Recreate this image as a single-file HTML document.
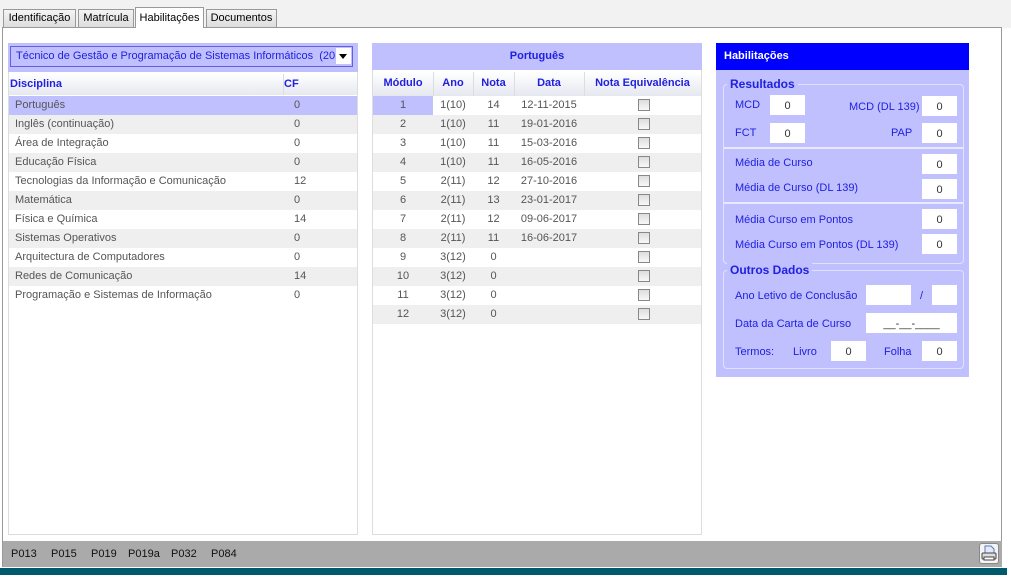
<!DOCTYPE html>
<html><head><meta charset="utf-8"><style>
*{margin:0;padding:0;box-sizing:border-box}
body{width:1011px;height:582px;background:#fff;font-family:"Liberation Sans",sans-serif;font-size:11px;position:relative;overflow:hidden}
.a{position:absolute}
.tab{position:absolute;top:9px;height:19px;border:1px solid #999;border-bottom:none;background:#e4e4e4;color:#000;font-size:11px;line-height:17px;text-align:center;background:linear-gradient(#f4f4f4,#dcdcdc)}
.blue{color:#2020e0}
.row{position:absolute;height:19px;line-height:19px;color:#555}
.g{background:#efefef}
.inp{position:absolute;background:#fff;height:20px;line-height:22px;text-align:center;color:#333}
.cb{position:absolute;width:12px;height:12px;border:1px solid #888;background:linear-gradient(#ddd,#f8f8f8)}
.fs{position:absolute;border:1px solid #e0e0ff;border-radius:4px}
.hl{position:absolute;height:2px;background:#e8e8ff}
</style></head><body>
<div class="a" style="left:0;top:0;width:1011px;height:28px;background:#f2f2f2"></div>
<div class="tab" style="left:3px;width:73px">Identificação</div>
<div class="tab" style="left:78px;width:56px">Matrícula</div>
<div class="tab" style="left:135px;width:69px;top:7px;height:21px;background:#fff;line-height:21px">Habilitações</div>
<div class="tab" style="left:206px;width:71px">Documentos</div>
<div class="a" style="left:2px;top:27px;width:1000px;height:540px;border:1px solid #999;border-top:1px solid #999;background:#fff"></div>
<div class="a" style="left:136px;top:27px;width:67px;height:2px;background:#fff"></div>

<!-- left panel -->
<div class="a" style="left:8px;top:43px;width:350px;height:492px;border:1px solid #ddd"></div>
<div class="a" style="left:8px;top:43px;width:350px;height:29px;background:#c0c0ff"></div>
<div class="a blue" style="left:10px;top:46px;width:343px;height:21px;border:1px solid #6060e0;line-height:19px;padding-left:5px;overflow:hidden;white-space:nowrap">Técnico de Gestão e Programação de Sistemas Informáticos &nbsp;(2015</div>
<div class="a" style="left:336px;top:48px;width:15px;height:16px;background:#fff"><div style="position:absolute;left:3px;top:6px;border-left:4px solid transparent;border-right:4px solid transparent;border-top:5px solid #000"></div></div>
<div class="a" style="left:9px;top:74px;width:348px;height:21px;background:linear-gradient(#fff,#e6e8f0)"></div>
<div class="a" style="left:283px;top:74px;width:1px;height:21px;background:#ddd"></div>
<div class="a blue" style="left:10px;top:78px;font-weight:bold">Disciplina</div>
<div class="a blue" style="left:284px;top:78px;font-weight:bold">CF</div>

<div class="row" style="left:9px;top:96px;width:348px;background:#c0c0ff"><span style="position:absolute;left:6px">Português</span><span style="position:absolute;left:285px">0</span></div>
<div class="row g" style="left:9px;top:115px;width:348px"><span style="position:absolute;left:6px">Inglês (continuação)</span><span style="position:absolute;left:285px">0</span></div>
<div class="row" style="left:9px;top:134px;width:348px"><span style="position:absolute;left:6px">Área de Integração</span><span style="position:absolute;left:285px">0</span></div>
<div class="row g" style="left:9px;top:153px;width:348px"><span style="position:absolute;left:6px">Educação Física</span><span style="position:absolute;left:285px">0</span></div>
<div class="row" style="left:9px;top:172px;width:348px"><span style="position:absolute;left:6px">Tecnologias da Informação e Comunicação</span><span style="position:absolute;left:285px">12</span></div>
<div class="row g" style="left:9px;top:191px;width:348px"><span style="position:absolute;left:6px">Matemática</span><span style="position:absolute;left:285px">0</span></div>
<div class="row" style="left:9px;top:210px;width:348px"><span style="position:absolute;left:6px">Física e Química</span><span style="position:absolute;left:285px">14</span></div>
<div class="row g" style="left:9px;top:229px;width:348px"><span style="position:absolute;left:6px">Sistemas Operativos</span><span style="position:absolute;left:285px">0</span></div>
<div class="row" style="left:9px;top:248px;width:348px"><span style="position:absolute;left:6px">Arquitectura de Computadores</span><span style="position:absolute;left:285px">0</span></div>
<div class="row g" style="left:9px;top:267px;width:348px"><span style="position:absolute;left:6px">Redes de Comunicação</span><span style="position:absolute;left:285px">14</span></div>
<div class="row" style="left:9px;top:286px;width:348px"><span style="position:absolute;left:6px">Programação e Sistemas de Informação</span><span style="position:absolute;left:285px">0</span></div>

<!-- middle panel -->
<div class="a" style="left:372px;top:43px;width:330px;height:492px;border:1px solid #ddd"></div>
<div class="a blue" style="left:372px;top:43px;width:330px;height:27px;background:#c0c0ff;font-weight:bold;text-align:center;line-height:27px">Português</div>
<div class="a" style="left:373px;top:72px;width:328px;height:24px;background:linear-gradient(#fff,#e6e8f0)"></div>
<div class="a" style="left:433px;top:72px;width:1px;height:24px;background:#ddd"></div>
<div class="a" style="left:473px;top:72px;width:1px;height:24px;background:#ddd"></div>
<div class="a" style="left:514px;top:72px;width:1px;height:24px;background:#ddd"></div>
<div class="a" style="left:584px;top:72px;width:1px;height:24px;background:#ddd"></div>
<div class="a blue" style="left:373px;top:77px;width:60px;text-align:center;font-weight:bold">Módulo</div>
<div class="a blue" style="left:433px;top:77px;width:40px;text-align:center;font-weight:bold">Ano</div>
<div class="a blue" style="left:473px;top:77px;width:41px;text-align:center;font-weight:bold">Nota</div>
<div class="a blue" style="left:514px;top:77px;width:70px;text-align:center;font-weight:bold">Data</div>
<div class="a blue" style="left:584px;top:77px;width:117px;text-align:center;font-weight:bold">Nota Equivalência</div>
<div id="mid"></div>

<!-- right panel -->
<div class="a" style="left:716px;top:43px;width:253px;height:334px;background:#c0c0ff"></div>
<div class="a" style="left:716px;top:43px;width:253px;height:27px;background:#0000ff;color:#fff;font-weight:bold;line-height:27px;padding-left:8px">Habilitações</div>
<div class="fs" style="left:723px;top:84px;width:241px;height:180px"></div>
<div class="a blue" style="left:727px;top:77px;background:#c0c0ff;padding:0 3px;font-weight:bold;font-size:12px">Resultados</div>
<div class="a blue" style="left:735px;top:99px">MCD</div>
<div class="inp" style="left:770px;top:95px;width:35px">0</div>
<div class="a blue" style="left:849px;top:101px">MCD (DL 139)</div>
<div class="inp" style="left:922px;top:96px;width:35px">0</div>
<div class="a blue" style="left:735px;top:127px">FCT</div>
<div class="inp" style="left:770px;top:123px;width:35px">0</div>
<div class="a blue" style="left:891px;top:127px">PAP</div>
<div class="inp" style="left:922px;top:123px;width:35px">0</div>
<div class="hl" style="left:724px;top:147px;width:239px"></div>
<div class="a blue" style="left:735px;top:157px">Média de Curso</div>
<div class="inp" style="left:922px;top:154px;width:35px">0</div>
<div class="a blue" style="left:735px;top:182px">Média de Curso (DL 139)</div>
<div class="inp" style="left:922px;top:179px;width:35px">0</div>
<div class="hl" style="left:724px;top:202px;width:239px"></div>
<div class="a blue" style="left:735px;top:214px">Média Curso em Pontos</div>
<div class="inp" style="left:922px;top:209px;width:35px">0</div>
<div class="a blue" style="left:735px;top:239px">Média Curso em Pontos (DL 139)</div>
<div class="inp" style="left:922px;top:234px;width:35px">0</div>
<div class="fs" style="left:723px;top:270px;width:241px;height:99px"></div>
<div class="a blue" style="left:727px;top:263px;background:#c0c0ff;padding:0 3px;font-weight:bold;font-size:12px">Outros Dados</div>
<div class="a blue" style="left:735px;top:290px">Ano Letivo de Conclusão</div>
<div class="inp" style="left:866px;top:285px;width:45px"></div>
<div class="a blue" style="left:920px;top:290px">/</div>
<div class="inp" style="left:932px;top:285px;width:25px"></div>
<div class="a blue" style="left:735px;top:318px">Data da Carta de Curso</div>
<div class="inp" style="left:866px;top:313px;width:91px">__-__-____</div>
<div class="a blue" style="left:735px;top:346px">Termos:</div>
<div class="a blue" style="left:793px;top:346px">Livro</div>
<div class="inp" style="left:831px;top:341px;width:35px">0</div>
<div class="a blue" style="left:884px;top:346px">Folha</div>
<div class="inp" style="left:922px;top:341px;width:35px">0</div>

<!-- bottom -->
<div class="a" style="left:3px;top:541px;width:999px;height:26px;background:#aaa"></div>
<div class="a" style="left:11px;top:548px;color:#111">P013</div>
<div class="a" style="left:51px;top:548px;color:#111">P015</div>
<div class="a" style="left:91px;top:548px;color:#111">P019</div>
<div class="a" style="left:128px;top:548px;color:#111">P019a</div>
<div class="a" style="left:171px;top:548px;color:#111">P032</div>
<div class="a" style="left:211px;top:548px;color:#111">P084</div>
<div class="a" style="left:979px;top:543px;width:20px;height:21px;border:1px solid #888;border-radius:3px;background:#f4f4f4">
<svg width="18" height="19" viewBox="0 0 18 19"><path d="M5 2h6l3 3v8H5z" fill="#dfeaff" stroke="#5a7ab0"/><rect x="2" y="9" width="14" height="6" rx="1" fill="#ddd" stroke="#444"/><rect x="4" y="13" width="10" height="3" fill="#fff" stroke="#444"/></svg></div>
<div class="a" style="left:0;top:568px;width:1007px;height:7px;background:#005a6e"></div>
<script>
var d=[["1(10)","14","12-11-2015"],["1(10)","11","19-01-2016"],["1(10)","11","15-03-2016"],["1(10)","11","16-05-2016"],["2(11)","12","27-10-2016"],["2(11)","13","23-01-2017"],["2(11)","12","09-06-2017"],["2(11)","11","16-06-2017"],["3(12)","0",""],["3(12)","0",""],["3(12)","0",""],["3(12)","0",""]];
var h="";d.forEach(function(r,i){var y=96+i*19;h+='<div class="row'+(i%2?' g':'')+'" style="left:373px;top:'+y+'px;width:328px">'+(i==0?'<div style="position:absolute;left:0;top:0;width:60px;height:19px;background:#c0c0ff"></div>':'')+'<span style="position:absolute;left:0;width:60px;text-align:center">'+(i+1)+'</span><span style="position:absolute;left:60px;width:40px;text-align:center">'+r[0]+'</span><span style="position:absolute;left:100px;width:41px;text-align:center">'+r[1]+'</span><span style="position:absolute;left:141px;width:70px;text-align:center">'+r[2]+'</span><div class="cb" style="left:265px;top:3px"></div></div>';});
document.getElementById("mid").innerHTML=h;
</script>
</body></html>
